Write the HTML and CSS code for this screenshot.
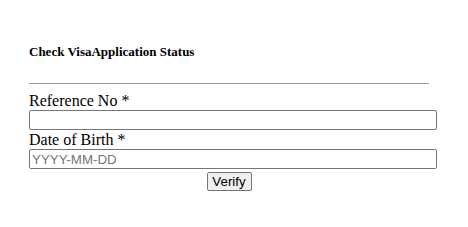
FILE: index.html
```html
<!DOCTYPE html>
<html>
<head>
<meta charset="utf-8">
<link rel="stylesheet" href="styles.css">
</head>
<body>
<div class="panel">
  <h4 class="title">Check VisaApplication Status</h4>
  <hr class="rule">
  <form class="form">
    <label class="label" for="ref">Reference No *</label>
    <input class="field" id="ref" type="text">
    <label class="label" for="dob">Date of Birth *</label>
    <input class="field" id="dob" type="text" placeholder="YYYY-MM-DD">
    <div class="actions"><button class="btn" type="button">Verify</button></div>
  </form>
</div>
</body>
</html>
```
FILE: styles.css
```css
html, body {
  margin: 0;
  padding: 0;
  background: #fff;
}
body {
  font-family: "Liberation Serif", "Times New Roman", serif;
  color: #000;
}
.panel {
  padding: 44px 0 0 29px;
  width: 408px;
}
.title {
  margin: 0;
  font-size: 13px;
  font-weight: bold;
  line-height: 15px;
}
.rule {
  width: 400px;
  margin: 24px 0 8px 0;
  border: 0;
  border-top: 1px solid #9a9a9a;
  height: 0;
}
.form {
  display: flex;
  flex-direction: column;
  margin: 0;
}
.label {
  font-size: 16px;
  line-height: 18px;
  height: 18px;
}
.field {
  box-sizing: border-box;
  width: 408px;
  height: 20px;
  margin: 0 0 1px 0;
  padding: 1px 2px;
  border: 1px solid #767676;
  border-radius: 2px;
  font-family: "Liberation Sans", Arial, sans-serif;
  font-size: 13.333px;
}
.field::placeholder {
  color: #757575;
}
.actions {
  display: flex;
  justify-content: center;
  padding: 2px 0 0 0;
  padding-right: 8px;
}
.btn {
  box-sizing: border-box;
  height: 19px;
  width: 45px;
  padding: 0;
  border: 1px solid #767676;
  border-radius: 2px;
  background: #efefef;
  font-family: "Liberation Sans", Arial, sans-serif;
  font-size: 13.333px;
  color: #000;
}
```
